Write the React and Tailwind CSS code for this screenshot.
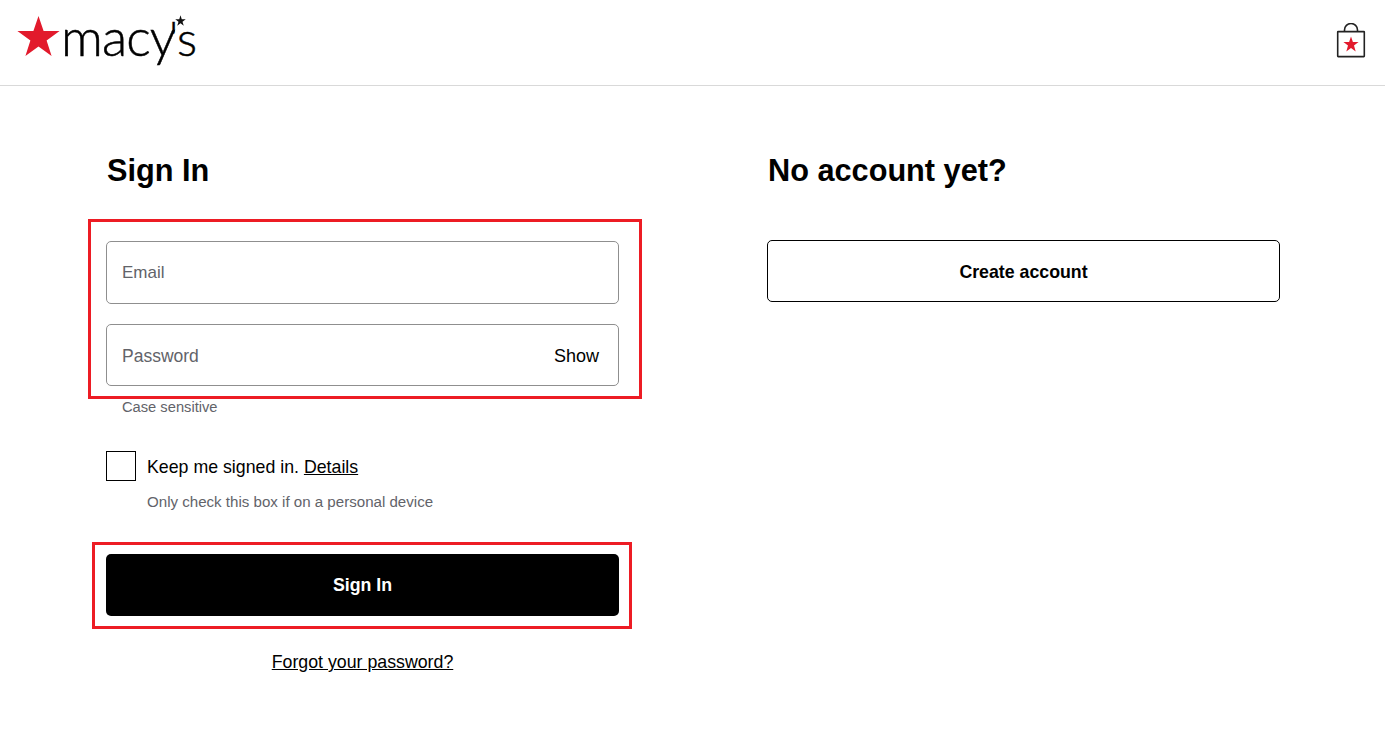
export default function App() {
  return (
    <div className="min-h-[745px] bg-white text-black font-['Liberation_Sans',Arial,sans-serif]">
      <header className="h-[86px] border-b border-[#d9d9d9] flex items-start justify-between pl-[17px] pr-[19px]">
        <div className="relative w-[180px] h-[60px] mt-[13px] flex">
          <svg width="44" height="44" viewBox="0 0 44 44" className="absolute left-0 top-[1px]">
            <polygon fill="#e21a2c" points="21.5,2 26.6,17 42.6,17 29.6,26.6 34.6,42 21.5,32.5 8.4,42 13.4,26.6 0.4,17 16.4,17" />
          </svg>
          <span className="absolute left-[44px] top-[-3px] text-[52px] leading-[52px] tracking-[-0.9px] font-['Lato',sans-serif] font-light [-webkit-text-stroke:0.5px_#000] whitespace-nowrap">mac<span className="tracking-[-7px]">y</span><span className="text-[47px]">'s</span></span>
          <svg width="11" height="11" viewBox="0 0 44 44" className="absolute left-[158px] top-[2px]">
            <polygon fill="#111" points="22,1 27,17 43,17 30,27 35,43 22,33 9,43 14,27 1,17 17,17" />
          </svg>
        </div>
        <svg width="30" height="36" viewBox="0 0 30 36" className="mt-[23px]">
          <path d="M8.5 9V7a6.5 6.5 0 0 1 13 0V9" fill="none" stroke="#222" strokeWidth="1.6" />
          <rect x="1.7" y="8.6" width="26.6" height="25" fill="#fff" stroke="#222" strokeWidth="1.6" rx="0.5" />
          <polygon fill="#e21a2c" points="15,13.5 16.9,19.1 22.6,19.1 18,22.6 19.7,28.4 15,24.9 10.3,28.4 12,22.6 7.4,19.1 13.1,19.1" />
        </svg>
      </header>

      <main className="flex pl-[106px] pt-[67px] gap-[148px]">
        <section className="relative w-[513px]">
          <h1 className="text-[30.7px] leading-[36px] font-bold pl-px">Sign In</h1>

          <div className="mt-[52px] flex flex-col gap-5">
            <div className="h-[63px] rounded-[5px] border border-[#8f8f8f] flex items-center px-[15px] pt-px text-[17px] text-[#626369]">Email</div>
            <div className="h-[62px] rounded-[5px] border border-[#8f8f8f] flex items-center justify-between pl-[15px] pr-[19px] pt-[2px] text-[17.5px] text-[#626369]">
              <span>Password</span>
              <span className="text-black text-[18px]">Show</span>
            </div>
          </div>
          <p className="mt-[13px] ml-4 text-[14.7px] leading-4 text-[#626369]">Case sensitive</p>

          <div className="mt-[36px] flex items-center gap-[10px]">
            <div className="w-[30px] h-[30px] border border-black"></div>
            <p className="text-[17.75px] leading-5 pt-[2px] pl-px">Keep me signed in. <a className="underline">Details</a></p>
          </div>
          <p className="mt-[12px] ml-[41px] text-[15.1px] leading-[18px] text-[#626369]">Only check this box if on a personal device</p>

          <button className="mt-[43px] w-full h-[62px] rounded-[5px] bg-black text-white font-bold text-[17.75px]">Sign In</button>
          <p className="mt-[36px] text-center text-[17.75px] leading-5"><a className="underline">Forgot your password?</a></p>

          <div className="absolute left-[-18px] top-[66px] w-[554px] h-[180px] border-[3px] border-[#ed1c24]"></div>
          <div className="absolute left-[-14px] top-[389px] w-[540px] h-[87px] border-[3px] border-[#ed1c24]"></div>
        </section>

        <section className="w-[513px]">
          <h2 className="text-[30.7px] leading-[36px] font-bold pl-px">No account yet?</h2>
          <button className="mt-[51px] w-full h-[62px] rounded-[5px] border border-black pt-[2px] font-bold text-[17.75px]">Create account</button>
        </section>
      </main>
    </div>
  );
}
